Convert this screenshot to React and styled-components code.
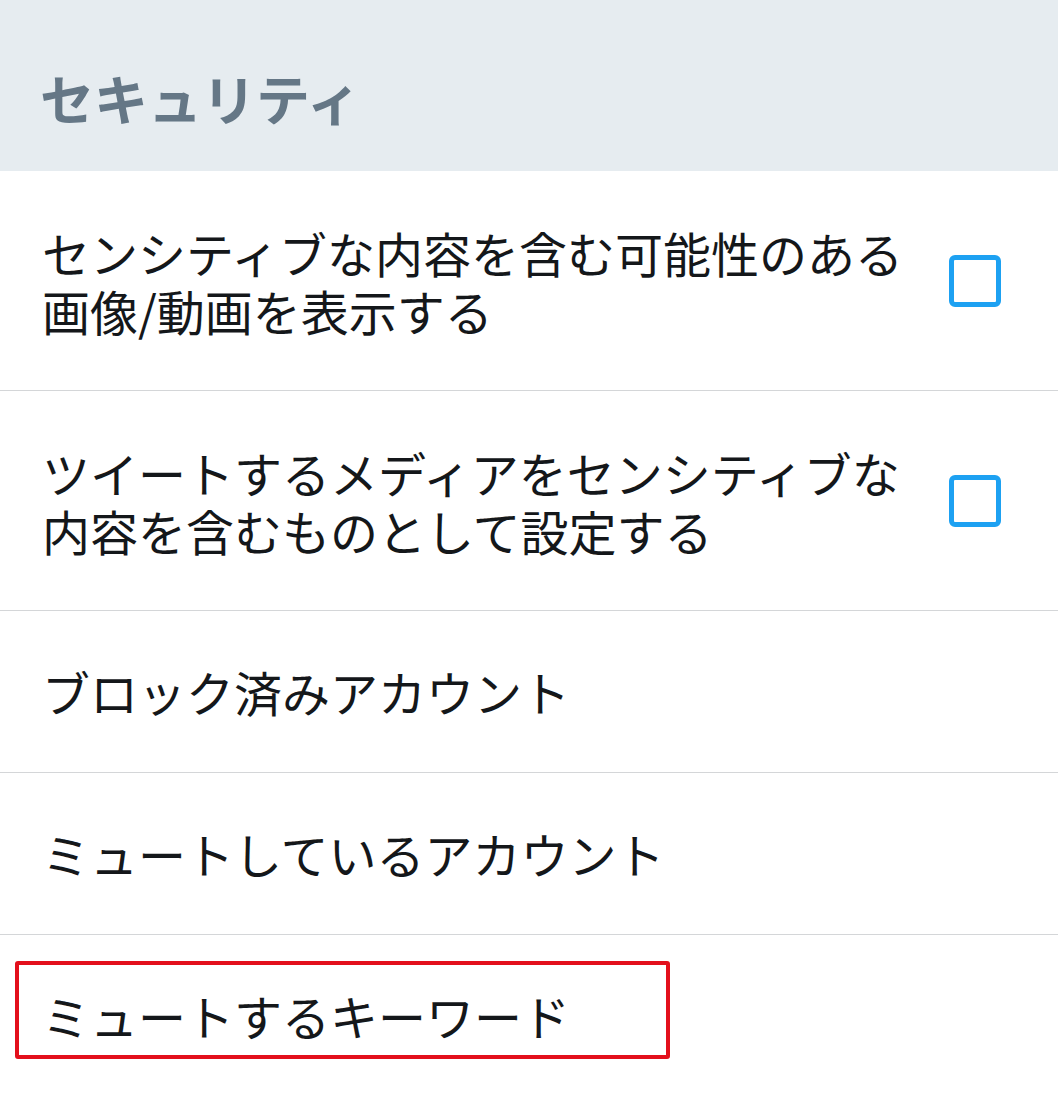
import styled, { createGlobalStyle } from "styled-components";

const GlobalStyle = createGlobalStyle`
  html, body {
    margin: 0;
    padding: 0;
    background: #ffffff;
  }
  body {
    font-family: "Noto Sans CJK JP", "Noto Sans", sans-serif;
    overflow: hidden;
  }
`;

const Page = styled.div`
  width: 1058px;
  min-height: 1095px;
  background: #ffffff;
`;

const SectionHeader = styled.div`
  height: 171px;
  background: #e6ecf0;
  display: flex;
  align-items: center;
  padding: 24px 40px 0;
  box-sizing: border-box;
`;

const SectionTitle = styled.h2`
  margin: 0;
  font-size: 54px;
  font-weight: 700;
  color: #657786;
  line-height: 1;
`;

const List = styled.div`
  display: flex;
  flex-direction: column;
`;

const Row = styled.div`
  position: relative;
  display: flex;
  align-items: center;
  justify-content: space-between;
  padding: ${(p) => (p.$multi ? "52px 57px 51px 42px" : "51px 57px 52px 42px")};
  border-bottom: ${(p) => (p.$last ? "none" : "1px solid #d4d6d8")};
`;

const Label = styled.div`
  font-size: 48px;
  line-height: 58px;
  color: #14171a;
  font-weight: 400;
`;

const Checkbox = styled.div`
  width: 52px;
  height: 52px;
  box-sizing: border-box;
  border: 5px solid #1da1f2;
  border-radius: 6px;
  flex-shrink: 0;
  margin-left: 20px;
`;

const Highlight = styled.div`
  position: absolute;
  left: 15px;
  top: 26px;
  width: 655px;
  height: 98px;
  box-sizing: border-box;
  border: 4px solid #e3101c;
  border-radius: 3px;
  pointer-events: none;
`;

const items = [
  {
    lines: ["センシティブな内容を含む可能性のある", "画像/動画を表示する"],
    checkbox: true,
  },
  {
    lines: ["ツイートするメディアをセンシティブな", "内容を含むものとして設定する"],
    checkbox: true,
  },
  { lines: ["ブロック済みアカウント"] },
  { lines: ["ミュートしているアカウント"] },
  { lines: ["ミュートするキーワード"], highlight: true },
];

export default function App() {
  return (
    <Page>
      <GlobalStyle />
      <SectionHeader>
        <SectionTitle>セキュリティ</SectionTitle>
      </SectionHeader>
      <List>
        {items.map((item, i) => (
          <Row
            key={i}
            $multi={item.lines.length > 1}
            $last={i === items.length - 1}
          >
            <Label>
              {item.lines.map((line, j) => (
                <div key={j}>{line}</div>
              ))}
            </Label>
            {item.checkbox && <Checkbox />}
            {item.highlight && <Highlight />}
          </Row>
        ))}
      </List>
    </Page>
  );
}
